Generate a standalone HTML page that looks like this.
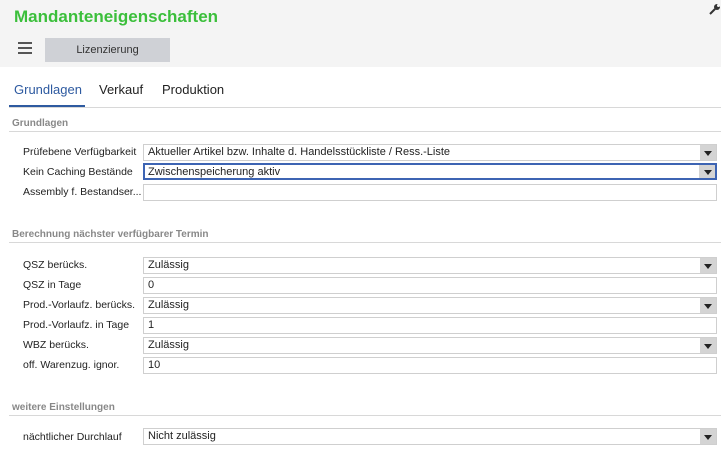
<!DOCTYPE html>
<html><head><meta charset="utf-8"><style>
*{box-sizing:border-box;margin:0;padding:0}
body{width:721px;height:450px;overflow:hidden;background:#fff;font-family:"Liberation Sans",sans-serif;color:#222;position:relative}
.hdr{position:absolute;left:0;top:0;width:721px;height:67px;background:#f4f4f4}
.title{position:absolute;left:14px;top:7px;font-size:17px;font-weight:bold;color:#3bbf3b}
.ham{position:absolute;left:18px;top:42px;width:14px;height:12px;border-top:2px solid #555;border-bottom:2px solid #555}
.ham:after{content:"";position:absolute;left:0;top:3px;width:14px;height:2px;background:#555}
.btn{position:absolute;left:45px;top:38px;width:125px;height:24px;background:#cfd1d6;font-size:11px;color:#333;text-align:center;line-height:24px}
.tab{position:absolute;top:82px;font-size:13px;color:#222}
.tab.a{color:#2e5aa0}
.ul{position:absolute;left:9px;top:105px;width:76px;height:3px;background:#2e5aa0}
.line{position:absolute;left:9px;width:712px;height:1px;background:#d8d8d8}
.sec{position:absolute;left:12px;font-size:10px;font-weight:bold;color:#888}
.lbl{position:absolute;left:23px;font-size:10.5px;color:#222}
.f{position:absolute;left:143px;width:574px;height:17px;border:1px solid #cfcfcf;font-size:11px;padding-left:4px;line-height:15px;background:#fff}
.f.sel:after{content:"";position:absolute;right:0;top:0;width:16px;height:15px;background:#d4d4d4}
.f.sel:before{content:"";position:absolute;right:4px;top:6px;border-left:4px solid transparent;border-right:4px solid transparent;border-top:5px solid #222;z-index:1}
.f.focus{border:2px solid #3d64b3;line-height:14px;padding-left:3px}
.f.focus:after{height:13px}.f.focus:before{top:5px;right:3px}
</style></head><body>
<div class="hdr"></div>
<div class="title">Mandanteneigenschaften</div>
<svg style="position:absolute;left:709px;top:3px" width="12" height="12" viewBox="0 0 12 12"><path d="M1 11 L6 6" stroke="#333" stroke-width="2"/><circle cx="8" cy="4" r="3" fill="#333"/><circle cx="9.5" cy="2.5" r="1.5" fill="#f4f4f4"/></svg>
<div class="ham"></div>
<div class="btn">Lizenzierung</div>
<div class="tab a" style="left:14px">Grundlagen</div>
<div class="tab" style="left:99px">Verkauf</div>
<div class="tab" style="left:162px">Produktion</div>
<div class="ul"></div>
<div class="line" style="top:107px"></div>
<div class="sec" style="top:118px">Grundlagen</div>
<div class="line" style="top:131px"></div>
<div class="lbl" style="top:146px">Prüfebene Verfügbarkeit</div>
<div class="f sel" style="top:144px">Aktueller Artikel bzw. Inhalte d. Handelsstückliste / Ress.-Liste</div>
<div class="lbl" style="top:166px">Kein Caching Bestände</div>
<div class="f sel focus" style="top:163px">Zwischenspeicherung aktiv</div>
<div class="lbl" style="top:186px">Assembly f. Bestandser...</div>
<div class="f" style="top:184px"></div>
<div class="sec" style="top:229px">Berechnung nächster verfügbarer Termin</div>
<div class="line" style="top:242px"></div>
<div class="lbl" style="top:259px">QSZ berücks.</div>
<div class="f sel" style="top:257px">Zulässig</div>
<div class="lbl" style="top:279px">QSZ in Tage</div>
<div class="f" style="top:277px">0</div>
<div class="lbl" style="top:299px">Prod.-Vorlaufz. berücks.</div>
<div class="f sel" style="top:297px">Zulässig</div>
<div class="lbl" style="top:319px">Prod.-Vorlaufz. in Tage</div>
<div class="f" style="top:317px">1</div>
<div class="lbl" style="top:339px">WBZ berücks.</div>
<div class="f sel" style="top:337px">Zulässig</div>
<div class="lbl" style="top:359px">off. Warenzug. ignor.</div>
<div class="f" style="top:357px">10</div>
<div class="sec" style="top:402px">weitere Einstellungen</div>
<div class="line" style="top:415px"></div>
<div class="lbl" style="top:431px">nächtlicher Durchlauf</div>
<div class="f sel" style="top:428px">Nicht zulässig</div>
</body></html>
